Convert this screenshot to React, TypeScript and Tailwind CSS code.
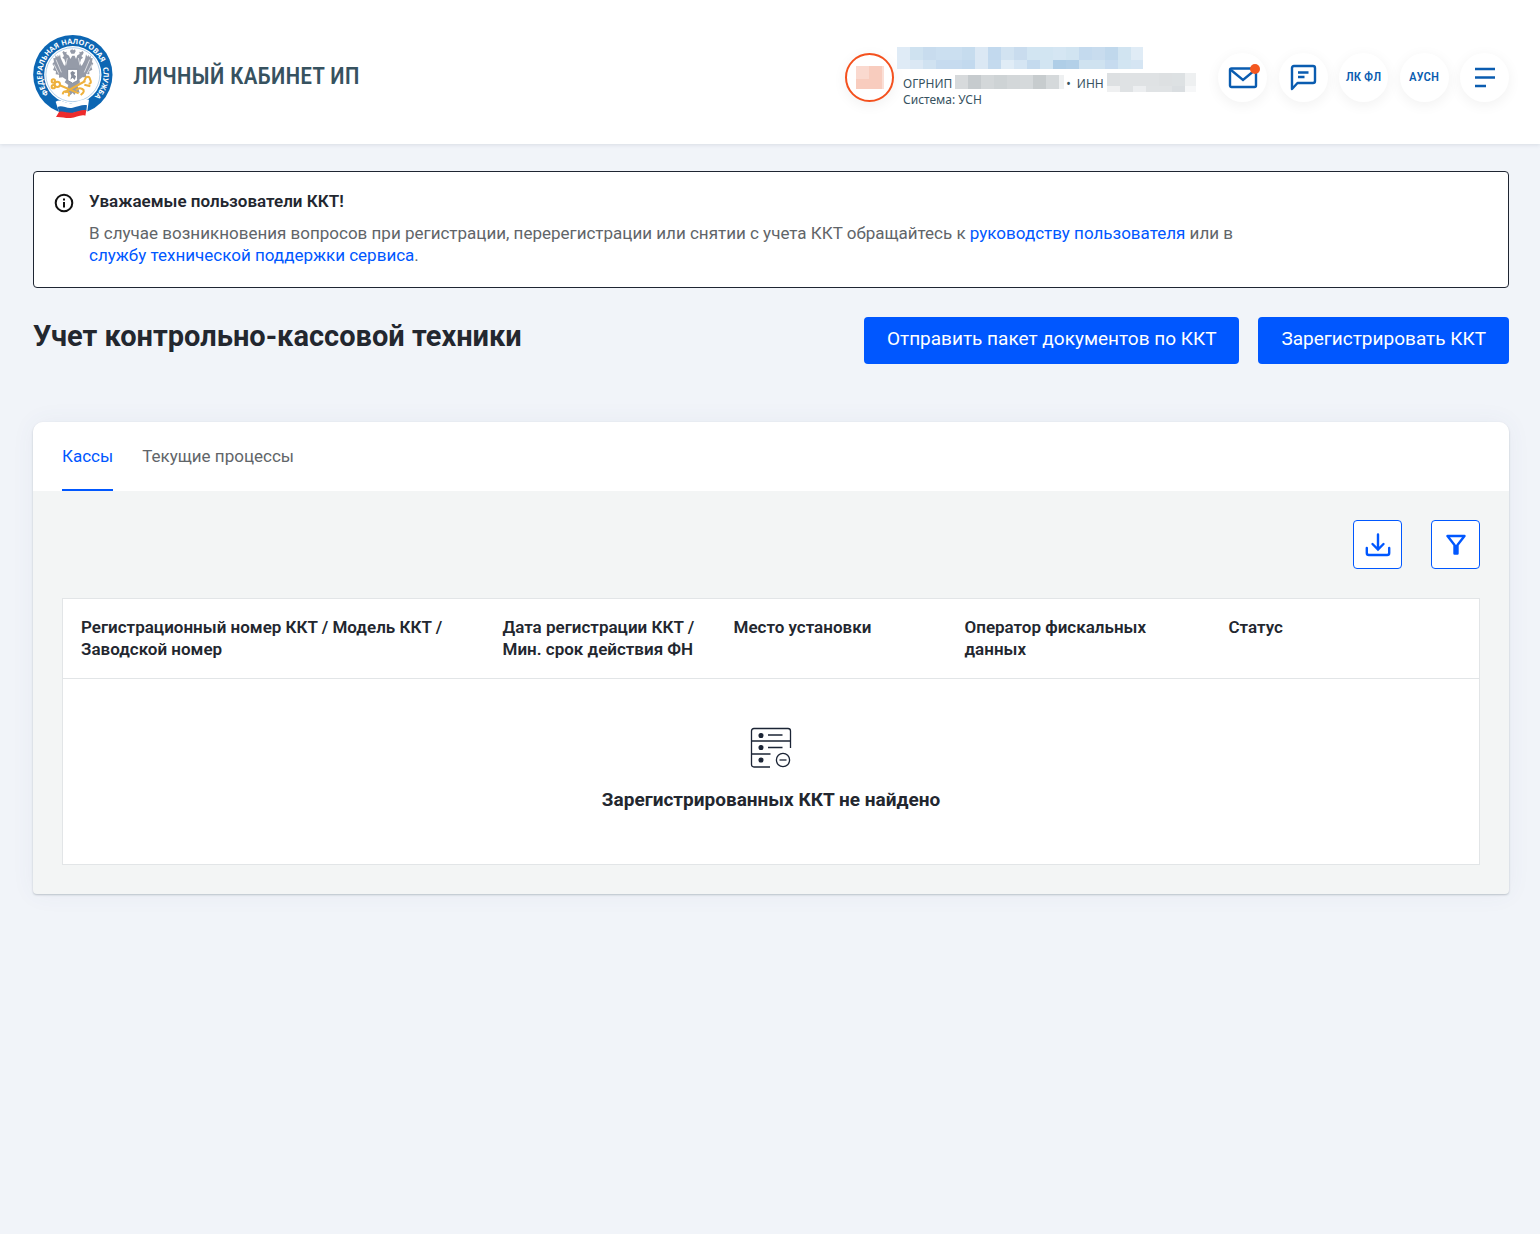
import React from "react";

const columns = [
  { title: "Регистрационный номер ККТ / Модель ККТ / Заводской номер", width: "w-[422px]" },
  { title: "Дата регистрации ККТ / Мин. срок действия ФН", width: "w-[231px]" },
  { title: "Место установки", width: "w-[231px]" },
  { title: "Оператор фискальных данных", width: "w-[264px]" },
  { title: "Статус", width: "" },
];

const roundButton =
  "relative flex size-[49px] items-center justify-center rounded-full bg-white text-[#0a5cb0] shadow-[0_3px_14px_rgba(0,0,0,0.06)]";

const nameMosaic = [
  ["#dfebf6", "#cfe2f0", "#c8dcee", "#cbdff0", "#cbdff0", "#c6dcee", "#dbe8f4", "#c2d9ee", "#d2e3f1", "#c9dcee", "#d2e5f2", "#d2e5f2", "#d5e6f3", "#d1e4f1", "#c4daee", "#c8dcee", "#c0d8ec", "#d1e4f1", "#e0ecf6"],
  ["#dfebf6", "#dbe8f4", "#d0e2f1", "#c6dbef", "#c6dbef", "#c2d9ee", "#dbe8f4", "#c4daee", "#e0ecf6", "#d5e5f3", "#c4daee", "#d2e5f2", "#afcee7", "#b3d0e8", "#cfe2f0", "#cfe2f0", "#c6dbef", "#d2e5f2", "#d5e5f3"],
];
const ogrnMosaic = [["#d7dadc", "#c6cbce", "#d3d7d9", "#ced3d5", "#d3d7d9", "#d5d9db", "#c7ccce", "#d5d9db", "#eef0f1"]];
const innMosaic = [
  ["#dde0e2", "#dfe2e4", "#dfe2e4", "#dfe2e4", "#dde0e2", "#dde1e3", "#eef0f1"],
  ["#eff0f1", "#dfe2e4", "#eceef0", "#e0e3e5", "#e0e3e5", "#dadee1", "#f6f7f8"],
];

const Mosaic: React.FC<{ rows: string[][]; width: number; height: number }> = ({
  rows,
  width,
  height,
}) => (
  <svg width={width} height={height} className="shrink-0" shapeRendering="crispEdges" aria-hidden="true">
    {rows.map((row, y) =>
      row.map((color, x) => (
        <rect key={`${y}-${x}`} x={x * 13} y={y * 13} width="13" height="14" fill={color} />
      ))
    )}
  </svg>
);

const Logo: React.FC = () => (
  <svg viewBox="39 27 240 255" width="80" height="85" className="shrink-0" role="img" aria-label="ФНС">
    <defs>
      <path id="ring" d="M 158 241 A 92 92 0 1 1 159 241" />
    </defs>
    <circle cx="158.5" cy="149" r="119" fill="#0c66b3" />
    <circle cx="158.5" cy="149" r="86" fill="#fff" />
    <circle cx="158.5" cy="149" r="81" fill="none" stroke="#8fb8dc" strokeWidth="2" />
    <g
      fill="#fff"
      fontFamily="'Open Sans', 'Noto Sans', sans-serif"
      fontSize="22"
      fontWeight="700"
      textAnchor="middle"
    >
      <text><textPath href="#ring" startOffset="28.6%">ФЕДЕРАЛЬНАЯ</textPath></text>
      <text><textPath href="#ring" startOffset="56.5%">НАЛОГОВАЯ</textPath></text>
      <text><textPath href="#ring" startOffset="79.5%">СЛУЖБА</textPath></text>
    </g>
    {/* двуглавый орёл */}
    <g fill="#959ba8">
      <path d="M150 79 L153 73 L157 76 L158 70 L160 76 L165 73 L167 79 L163 86 H154 Z" />
      <path d="M127 82 L131 78 L135 82 L140 80 L139 87 L147 92 L151 102 L157 92 L164 92 L168 102 L172 91 L179 87 L178 80 L183 82 L187 78 L191 82 L189 88 L184 93 L189 98 L183 103 L180 114 L185 123 L193 108 L196 99 L198 88 L202 95 L206 89 L207 97 L212 91 L212 100 L218 99 L216 111 L220 116 L214 125 L217 134 L208 139 L208 148 L198 147 L199 157 L187 157 L178 164 L180 172 L172 180 L145 180 L134 172 L139 164 L128 157 L117 158 L117 149 L107 148 L108 139 L99 135 L103 125 L97 117 L102 111 L100 99 L106 100 L106 91 L112 97 L113 89 L117 95 L120 88 L122 99 L126 108 L133 123 L137 114 L133 103 L127 98 L132 93 Z" />
      <path d="M145 180 H172 L179 204 L169 200 L163 210 L158 203 L151 211 L147 200 L137 204 Z" />
    </g>
    <g fill="none" stroke="#fff" strokeWidth="2">
      <path d="M108 104 L124 142 M102 118 L116 146 M209 104 L193 142 M216 118 L201 146" />
      <path d="M142 99 L137 121 M175 99 L180 121" />
    </g>
    <path d="M143 133 H173 V163 Q173 170 166 170 L158 175 L150 170 Q143 170 143 163 Z" fill="#fff" stroke="#858c9a" strokeWidth="3" />
    <path d="M151 143 L157 138 L166 143 L162 149 L168 154 L164 165 L158 158 L151 164 L154 153 Z" fill="#858c9a" />
    {/* скрещённые ключи */}
    <g fill="none" stroke="#eeb13d" strokeWidth="6">
      <path d="M118 180 L176 205 M134 202 L196 168" />
      <circle cx="112" cy="178" r="8" />
      <circle cx="100" cy="168" r="5" />
      <circle cx="100" cy="185" r="5" />
      <path d="M168 196 Q176 186 187 192 T182 210" />
      <path d="M128 208 Q130 196 141 200 T145 214" />
      <path d="M192 169 L198 157 Q209 152 210 163 Q217 176 206 176 M193 179 L211 184" />
    </g>
    {/* флаг */}
    <path d="M107 230 C124 219 138 240 158 234 S190 222 207 224 L200 272 C180 266 168 282 152 282 S122 280 104 278 L117 262 Z" fill="#fff" />
    <path d="M113 246 C126 239 140 252 158 248 S188 238 201 241 L199 258 C186 255 172 262 156 265 S128 258 117 262 Z" fill="#1766b0" />
    <path d="M117 261 C130 256 142 266 158 263 S186 253 199 256 L196 272 C182 267 168 278 152 279 S124 275 108 276 Z" fill="#ed2c2d" />
  </svg>
);

const Header: React.FC = () => (
  <header className="flex h-36 items-center justify-between bg-white pr-[31px] pl-[33px] shadow-[0_1px_4px_rgba(40,60,80,0.12)]">
    <a href="#" className="flex items-center gap-5 pt-2">
      <Logo />
      <span className="font-['Roboto_Condensed',Roboto,sans-serif] text-2xl font-medium text-[#37525f]">
        ЛИЧНЫЙ КАБИНЕТ ИП
      </span>
    </a>

    <div className="flex items-center gap-[22px] pt-2.5">
      <div className="flex items-center gap-[3px]">
        <div className="flex size-[49px] items-center justify-center rounded-full border-2 border-[#f4511e] bg-white shadow-[0_3px_14px_rgba(0,0,0,0.06)]">
          <svg width="28" height="23" shapeRendering="crispEdges" aria-hidden="true">
            <rect width="28" height="23" fill="#f8ccbe" />
            <rect width="13" height="13" fill="#fad9cf" />
            <rect x="26" width="2" height="23" fill="#fbdfd6" />
          </svg>
        </div>
        <div className="w-[299px] font-['Noto_Sans',sans-serif] text-xs leading-4 text-[#37525f]">
          <Mosaic rows={nameMosaic} width={246} height={22} />
          <div className="mt-1 flex h-[19px] items-end pl-1.5">
            <span className="mr-[3px]">ОГРНИП</span>
            <div className="self-center">
              <Mosaic rows={ogrnMosaic} width={109} height={14} />
            </div>
            <span className="ml-0.5">•</span>
            <span className="mr-[3px] ml-1.5">ИНН</span>
            <Mosaic rows={innMosaic} width={89} height={19} />
          </div>
          <p className="pl-1.5">Система: УСН</p>
        </div>
      </div>

      <nav className="flex w-[291px] justify-between font-['Roboto_Condensed',Roboto,sans-serif] text-[13px] font-medium">
        <button type="button" className={roundButton} aria-label="Сообщения">
          <svg width="30" height="24" viewBox="0 0 30 24" fill="none" stroke="currentColor" strokeWidth="2.4">
            <rect x="2" y="3.500" width="26" height="18.500" rx="1.5" />
            <path d="M3 5 L15 15 L27 5" />
          </svg>
          <span className="absolute top-[11px] right-[7px] size-2.5 rounded-full bg-[#f4571f]" />
        </button>
        <button type="button" className={roundButton} aria-label="Обращения">
          <svg width="28" height="28" viewBox="0 0 28 28" fill="none" stroke="currentColor" strokeWidth="2.4">
            <path d="M3 26 V5 Q3 3 5 3 H24 Q26 3 26 5 V18 Q26 20 24 20 H8.5 Z" strokeLinejoin="round" />
            <path d="M9 9.500 H19.500 M9 14 H15.500" />
          </svg>
        </button>
        <button type="button" className={roundButton}>ЛК ФЛ</button>
        <button type="button" className={roundButton}>АУСН</button>
        <button type="button" className={roundButton} aria-label="Меню">
          <svg width="20" height="22" viewBox="0 0 20 22" fill="none" stroke="currentColor" strokeWidth="2.4">
            <path d="M0 3 H20 M0 11.500 H20 M0 20 H11" />
          </svg>
        </button>
      </nav>
    </div>
  </header>
);

const App: React.FC = () => {
  return (
    <div className="min-h-screen bg-[#f1f4f9] font-[Roboto,sans-serif] text-[17px] text-[#23272f]">
      <Header />

      <main className="pt-[27px] pr-[31px] pb-10 pl-[33px]">
        <section className="flex gap-[15px] rounded border border-[#1e2532] bg-white px-5 pt-[18px] pb-[21px]">
          <svg width="20" height="20" viewBox="0 0 20 20" className="mt-[3px] shrink-0" fill="none" stroke="#111" strokeWidth="2" aria-hidden="true">
            <circle cx="10" cy="10" r="8.300" />
            <path d="M10 9 V14.500 M10 5.500 V7.500" />
          </svg>
          <div className="max-w-[1160px] leading-[22px]">
            <h2 className="mb-2.5 font-semibold">Уважаемые пользователи ККТ!</h2>
            <p className="text-[#616569]">
              В случае возникновения вопросов при регистрации, перерегистрации или снятии с учета ККТ
              обращайтесь к{" "}
              <a href="#" className="text-[#0057ff]">руководству пользователя</a> или в{" "}
              <a href="#" className="text-[#0057ff]">службу технической поддержки сервиса</a>.
            </p>
          </div>
        </section>

        <div className="mt-[29px] flex items-start justify-between">
          <h1 className="text-[29px] leading-[38px] font-bold">Учет контрольно-кассовой техники</h1>
          <div className="flex gap-[19px] text-[19px] text-white">
            <button type="button" className="h-[47px] rounded bg-[#0057ff] px-[23px] pb-[3px]">
              Отправить пакет документов по ККТ
            </button>
            <button type="button" className="h-[47px] rounded bg-[#0057ff] px-[23px] pb-[3px]">
              Зарегистрировать ККТ
            </button>
          </div>
        </div>

        <section className="mt-[58px] rounded-t-[10px] rounded-b-sm bg-[#f3f5f5] shadow-[0_1px_2px_rgba(40,60,70,0.25),0_0_24px_rgba(60,80,130,0.06)]">
          <div className="flex gap-[29px] rounded-t-[10px] bg-white px-[29px]">
            <button type="button" className="h-[69px] border-b-2 border-[#0057ff] pt-0.5 text-[#0057ff]">
              Кассы
            </button>
            <button type="button" className="h-[69px] border-b-2 border-transparent pt-0.5 text-[#616569]">
              Текущие процессы
            </button>
          </div>

          <div className="p-[29px]">
            <div className="flex justify-end gap-[29px] text-[#0057ff]">
              <button type="button" aria-label="Скачать" className="flex size-[49px] items-center justify-center rounded border border-[#0057ff] bg-white">
                <svg width="26" height="24" viewBox="0 0 26 24" fill="none" stroke="currentColor" strokeWidth="2.4" strokeLinecap="round">
                  <path d="M13 1.500 V15.500 M7.500 11 L13 16.500 L18.500 11" />
                  <path d="M1.800 15 V20 Q1.800 22 3.800 22 H22.200 Q24.200 22 24.200 20 V15" />
                </svg>
              </button>
              <button type="button" aria-label="Фильтр" className="flex size-[49px] items-center justify-center rounded border border-[#0057ff] bg-white">
                <svg width="20" height="22" viewBox="0 0 20 22" fill="none" stroke="currentColor" strokeWidth="2.4">
                  <path d="M1.500 2 H18.500 L11.500 11 V19.500 H8.500 V11 Z" strokeLinejoin="round" />
                  <path d="M10 11 V20" />
                </svg>
              </button>
            </div>

            <table className="mt-[29px] w-full table-fixed border border-[#e2e5e7] bg-white">
              <thead>
                <tr className="border-b border-[#e2e5e7]">
                  {columns.map((column) => (
                    <th
                      key={column.title}
                      scope="col"
                      className={`${column.width} px-[18px] pt-[17px] pb-[18px] text-left align-top leading-[22px] font-semibold`}
                    >
                      {column.title}
                    </th>
                  ))}
                </tr>
              </thead>
              <tbody>
                <tr>
                  <td colSpan={5} className="pt-12 pb-[50px] text-center">
                    <svg width="42" height="42" viewBox="0 0 42 42" className="mx-auto" fill="none" stroke="#1b2435" strokeWidth="1.3" aria-hidden="true">
                      <path d="M20 40 H4 Q1.500 40 1.500 37.500 V4 Q1.500 1.500 4 1.500 H38 Q40.500 1.500 40.500 4 V21" />
                      <path d="M1.500 14 H40.500 M1.500 27 H20.500" />
                      <path d="M18 8 H32.500 M18 20.500 H32.500" />
                      <circle cx="33" cy="33" r="6.600" />
                      <path d="M29.500 33 H36.500" />
                      <g fill="#1b2435">
                        <circle cx="11" cy="8.500" r="1.900" />
                        <circle cx="11" cy="20.500" r="1.900" />
                        <circle cx="11" cy="33" r="1.900" />
                      </g>
                    </svg>
                    <p className="mt-[17px] text-[19px] leading-7 font-bold">Зарегистрированных ККТ не найдено</p>
                  </td>
                </tr>
              </tbody>
            </table>
          </div>
        </section>
      </main>
    </div>
  );
};

export default App;
